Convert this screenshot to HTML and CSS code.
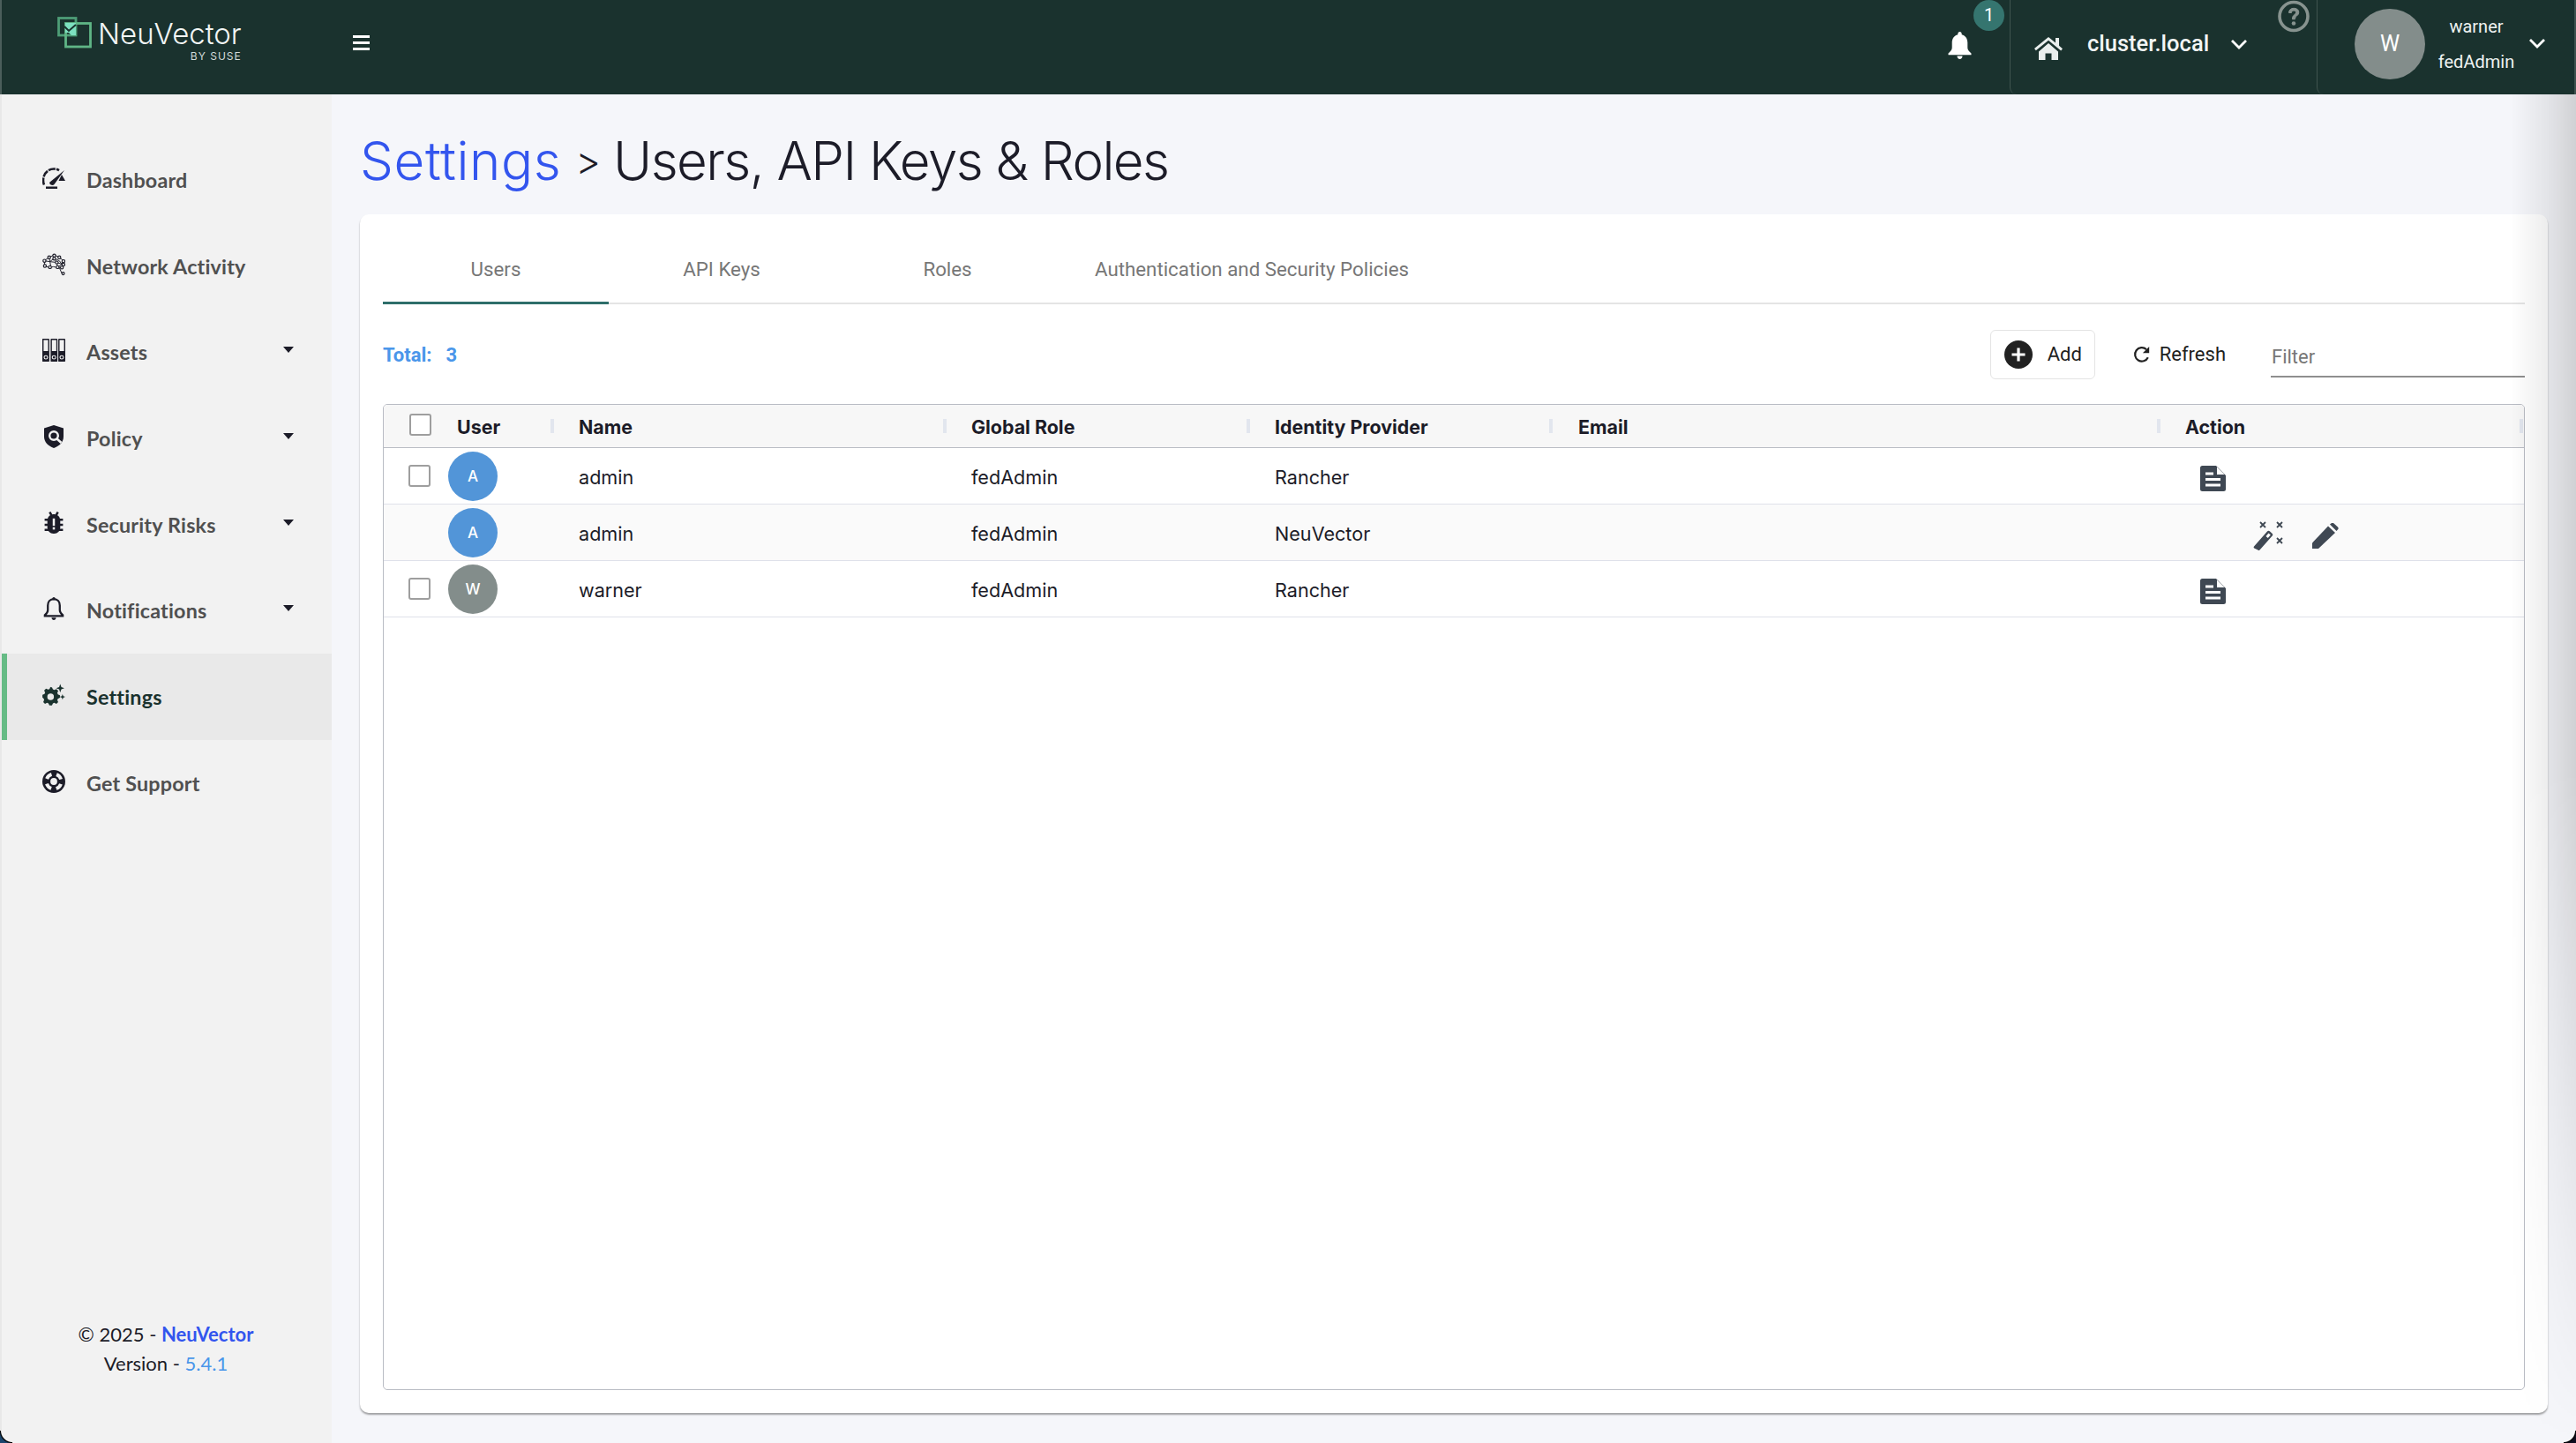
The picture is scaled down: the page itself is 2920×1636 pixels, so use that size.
FILE: index.html
```html
<!DOCTYPE html>
<html lang="en">
<head>
  <meta charset="UTF-8" />
  <title>NeuVector - Users, API Keys &amp; Roles</title>
  <link rel="stylesheet" href="styles.css">
</head>
<body>

  <!-- TOP BAR -->
  <header class="topbar">
    <div class="brand">
      <svg class="brand-mark" viewBox="0 0 40 36" width="40" height="36">
        <rect x="1.500" y="1.500" width="19.500" height="19.500" fill="none" stroke="#4e9d77" stroke-width="2.800"/>
        <rect x="9.500" y="7.500" width="28" height="26.500" fill="none" stroke="#5fb586" stroke-width="2.800"/>
        <path d="M9 7h12v14h-5l-3-3-4 0z" fill="#7de0c0"/>
        <path d="M8 11l5 5 8-7" fill="none" stroke="#1a322e" stroke-width="2"/>
      </svg>
      <div class="brand-text">
        <span class="brand-name">NeuVector</span>
        <span class="brand-sub">BY SUSE</span>
      </div>
    </div>
    <div class="hamburger"><i></i><i></i><i></i></div>

    <div class="topbar-right">
      <div class="alerts">
        <span class="alert-count">1</span>
        <svg class="alert-bell" viewBox="0 0 27 31" width="27" height="31">
          <path d="M13.500 0c1.300 0 2.200 1 2.200 2.300v1c4.300 1 6.600 4.600 6.600 9v5.700c0 2.300 1.500 4 4.200 6.400v1.800H.5v-1.800c2.700-2.400 4.200-4.100 4.200-6.400v-5.700c0-4.400 2.300-8 6.600-9v-1C11.300 1 12.200 0 13.500 0z" fill="#fff"/>
          <path d="M10.500 27.500h6c0 2-1.300 3.500-3 3.500s-3-1.500-3-3.500z" fill="#fff"/>
        </svg>
      </div>
      <div class="cluster">
        <svg class="home-icon" viewBox="0 0 34 27" width="34" height="27">
          <path d="M1 14L17 1l8 6.500V2h4v8.800l4 3.400-1.800 2.200L17 4.800 2.800 16.200z" fill="#e9eeed"/>
          <path d="M6 17.500L17 8l11 9.500V27h-7.500v-7.500h-7V27H6z" fill="#e9eeed"/>
        </svg>
        <span class="cluster-name">cluster.local</span>
        <svg class="chev" viewBox="0 0 20 12" width="20" height="12"><path d="M2 2l8 8 8-8" fill="none" stroke="#fff" stroke-width="2.800"/></svg>
        <svg class="help-icon" viewBox="0 0 36 37" width="36" height="37">
          <circle cx="18" cy="18.500" r="16" fill="none" stroke="#87938f" stroke-width="3.600"/>
          <path d="M12.500 14.500c0-3.300 2.500-5.200 5.700-5.200 3.300 0 5.600 1.900 5.600 4.700 0 4-4.300 3.900-4.300 7.300v.5h-3v-.8c0-4.300 4.100-4.400 4.100-6.900 0-1.200-1-2.100-2.500-2.100s-2.600 1-2.600 2.500z" fill="#87938f" stroke="#87938f" stroke-width="1"/>
          <circle cx="18" cy="26.500" r="2.300" fill="#87938f"/>
        </svg>
      </div>
      <div class="account">
        <span class="account-avatar">W</span>
        <div class="account-info">
          <span>warner</span>
          <span>fedAdmin</span>
        </div>
        <svg class="chev" viewBox="0 0 20 12" width="20" height="12"><path d="M2 2l8 8 8-8" fill="none" stroke="#fff" stroke-width="2.800"/></svg>
      </div>
    </div>
  </header>

  <div class="layout">
    <!-- SIDE NAV -->
    <aside class="sidebar">
      <nav class="nav">
        <a class="nav-item">
          <svg class="nav-icon" viewBox="0 0 26 24"><path d="M2 19.500C1.300 18 1 16.500 1 14.500 1 7 6.300 1.500 13 1.500c2.200 0 4 .5 6 1.700" fill="none" stroke="#1c1c28" stroke-width="2.600" stroke-dasharray="8 1.200"/><path d="M8.500 16.500L25 3 13.500 19c-.8 1.100-2.600 1.300-3.800.6s-2-1.900-1.200-3.100z" fill="#1c1c28"/><path d="M22 8l4 7h-7.500z" fill="#1c1c28"/><rect x="4" y="21.500" width="13" height="2.500" fill="#1c1c28"/></svg>
          <span>Dashboard</span>
        </a>
        <a class="nav-item">
          <svg class="nav-icon" viewBox="0 0 27 25" fill="none" stroke="#1c1c28" stroke-width="1"><path d="M2 8L8 4l6-3 6 3 5 4-2 4 2 1-3 3-2 0 3 7M2 8l1 6 5 2 5-1 5 1M2 8l7 1 5-4 6 3 3 4-5 4M8 4l1 5 1 6M14 1v4l3 5 1 6M9 9l8 1 6 2"/><g fill="#f2f2f2" stroke-width="1.200"><circle cx="2.500" cy="8" r="1.700"/><circle cx="8" cy="4" r="1.700"/><circle cx="14" cy="1.800" r="1.700"/><circle cx="20" cy="4" r="1.700"/><circle cx="24.800" cy="8.500" r="1.700"/><circle cx="3" cy="14" r="1.700"/><circle cx="9" cy="15.500" r="1.700"/><circle cx="14" cy="5.500" r="1.700"/><circle cx="17" cy="10" r="1.700"/><circle cx="24.800" cy="12.500" r="1.700"/><circle cx="18" cy="15.500" r="1.700"/><circle cx="23" cy="16" r="1.700"/><circle cx="24.500" cy="23" r="1.500"/></g></svg>
          <span>Network Activity</span>
        </a>
        <a class="nav-item has-sub">
          <svg class="nav-icon" viewBox="0 0 24 24"><g fill="#1c1c28"><path fill-rule="evenodd" d="M1 0h5.500a.8.800 0 0 1 .8.800v22.400a.8.800 0 0 1-.8.800H1a.8.800 0 0 1-1-.8V.8A.8.800 0 0 1 1 0zm.3 1.300v11.700h4.700V1.300z"/><path fill-rule="evenodd" d="M9.500 0h5.500a.8.800 0 0 1 .8.800v22.400a.8.800 0 0 1-.8.800H9.500a.8.800 0 0 1-.8-.8V.8a.8.800 0 0 1 .8-.8zm.5 1.300v11.700h4.600V1.300z"/><path fill-rule="evenodd" d="M17.500 0H23a1 1 0 0 1 1 .8v22.400a1 1 0 0 1-1 .8h-5.500a.8.800 0 0 1-.8-.8V.8a.8.800 0 0 1 .8-.8zm.5 1.300v11.700h4.700V1.300z"/></g><g fill="none" stroke="#f2f2f2" stroke-width="1"><circle cx="3.700" cy="19.500" r="1.800"/><circle cx="12.200" cy="19.500" r="1.800"/><circle cx="20.300" cy="19.500" r="1.800"/></g></svg>
          <span>Assets</span>
          <i class="caret"></i>
        </a>
        <a class="nav-item has-sub">
          <svg class="nav-icon" viewBox="0 0 22 26"><path d="M11 0l11 3.500v9.500c0 6-4.500 10.700-11 13C4.500 23.700 0 19 0 13V3.500z" fill="#1c1c28"/><circle cx="11" cy="12" r="4.800" fill="none" stroke="#f2f2f2" stroke-width="2.400"/><path d="M14.500 15.500l5 4.500" stroke="#f2f2f2" stroke-width="2.600"/></svg>
          <span>Policy</span>
          <i class="caret"></i>
        </a>
        <a class="nav-item has-sub">
          <svg class="nav-icon" viewBox="0 0 20 25"><g stroke="#1c1c28" stroke-width="2.400" fill="none"><path d="M5.500 0.500l2 3.500M14.500 0.500l-2 3.500M0 9h4M20 9h-4M0 14.500h4M20 14.500h-4M0 20h4.500M20 20h-4.500"/></g><rect x="3" y="3" width="14" height="21" rx="6.500" fill="#1c1c28"/><rect x="8.800" y="7.500" width="2.400" height="8" fill="#f2f2f2"/><rect x="8.800" y="17" width="2.400" height="2.600" fill="#f2f2f2"/></svg>
          <span>Security Risks</span>
          <i class="caret"></i>
        </a>
        <a class="nav-item has-sub">
          <svg class="nav-icon" viewBox="0 0 20 23"><path d="M10 1.800c3.800 0 6 3 6 6.500v4.700c0 2 1 3.300 3 5v1H1v-1c2-1.700 3-3 3-5V8.300c0-3.500 2.200-6.500 6-6.500z" fill="none" stroke="#1c1c28" stroke-width="2"/><circle cx="10" cy="1.600" r="1.500" fill="#1c1c28"/><path d="M7.800 20.500h4.400c0 1.500-1 2.500-2.200 2.500s-2.200-1-2.200-2.500z" fill="#1c1c28"/></svg>
          <span>Notifications</span>
          <i class="caret"></i>
        </a>
        <a class="nav-item active">
          <svg class="nav-icon" viewBox="0 0 25 24"><path d="M9.500 6.500l1 0 1 2.300 1.500.6 2.300-1 2 2-1 2.300.6 1.500 2.300 1v2.800l-2.300 1-.6 1.500 1 2.300-2 1.700-2.300-1-1.500.6-1 2.300H7.700l-1-2.300-1.500-.6-2.300 1-1.900-1.900 1-2.300-.6-1.500L.1 17.600v-2.800l2.300-1 .6-1.500-1-2.300 2-2 2.300 1 1.500-.6 1-2.300z" transform="translate(0 -3)" fill="#1a322e"/><circle cx="9" cy="14" r="3.600" fill="#e9e9e9"/><path d="M19.500 0l1.200 3.300L24 4.500l-3.300 1.200-1.200 3.300-1.200-3.300L15 4.500l3.300-1.200z" fill="#1a322e"/><path d="M22 11l.8 2.200 2.200.8-2.200.8-.8 2.200-.8-2.200-2.200-.8 2.200-.8z" fill="#1a322e"/></svg>
          <span>Settings</span>
        </a>
        <a class="nav-item">
          <svg class="nav-icon" viewBox="0 0 24 24"><circle cx="12" cy="12" r="12" fill="#1c1c28"/><circle cx="12" cy="12" r="7.800" fill="none" stroke="#f2f2f2" stroke-width="3.600" stroke-dasharray="7 5.250" stroke-dashoffset="-2.630"/><circle cx="12" cy="12" r="3.600" fill="#f2f2f2"/></svg>
          <span>Get Support</span>
        </a>
      </nav>
      <div class="sidebar-foot">
        <div>© 2025 - <a class="foot-link">NeuVector</a></div>
        <div>Version - <a class="foot-version">5.4.1</a></div>
      </div>
    </aside>

    <!-- PAGE -->
    <main class="page">
      <h1 class="page-title"><span class="crumb">Settings</span><span class="crumb-sep">&gt;</span><span class="crumb-here">Users, API Keys &amp; Roles</span></h1>

      <section class="card">
        <div class="tabs">
          <a class="tab tab-active">Users</a>
          <a class="tab">API Keys</a>
          <a class="tab">Roles</a>
          <a class="tab tab-wide">Authentication and Security Policies</a>
        </div>

        <div class="toolbar">
          <div class="total"><span>Total:</span><span>3</span></div>
          <div class="tools">
            <button class="btn btn-add">
              <svg viewBox="0 0 32 32" width="32" height="32"><circle cx="16" cy="16" r="16" fill="#212121"/><path d="M16 8.500v15M8.500 16h15" stroke="#fff" stroke-width="3.200"/></svg>
              Add
            </button>
            <button class="btn btn-refresh">
              <svg viewBox="0 0 22 22" width="20" height="20"><path d="M18.500 14.500A8.500 8.500 0 1 1 16.500 4.500" fill="none" stroke="#212121" stroke-width="2.400"/><path d="M20 1v8h-8z" fill="#212121"/></svg>
              Refresh
            </button>
            <div class="filter">Filter</div>
          </div>
        </div>

        <div class="grid">
          <div class="grid-row grid-head">
            <div class="cell cell-check"><span class="check"></span></div>
            <div class="cell cell-user">User<i class="sep"></i></div>
            <div class="cell">Name<i class="sep"></i></div>
            <div class="cell">Global Role<i class="sep"></i></div>
            <div class="cell">Identity Provider<i class="sep"></i></div>
            <div class="cell cell-email">Email<i class="sep"></i></div>
            <div class="cell">Action<i class="sep sep-end"></i></div>
          </div>

          <div class="grid-row">
            <div class="cell cell-check"><span class="check"></span></div>
            <div class="cell cell-avatar"><span class="avatar avatar-blue">A</span></div>
            <div class="cell">admin</div>
            <div class="cell">fedAdmin</div>
            <div class="cell">Rancher</div>
            <div class="cell"></div>
            <div class="cell cell-actions">
              <svg class="act-doc" viewBox="0 0 29 29" width="29" height="29"><path d="M2.500 0H18l11 11v15.500a2.500 2.500 0 0 1-2.500 2.500h-24A2.500 2.500 0 0 1 0 26.500v-24A2.500 2.500 0 0 1 2.500 0z" fill="#3f4853"/><path d="M19 1.500v8.500h8.500z" fill="#fff"/><rect x="6" y="7.500" width="9" height="3" fill="#fff"/><rect x="6" y="14" width="17" height="3" fill="#fff"/><rect x="6" y="20.500" width="17" height="3" fill="#fff"/></svg>
            </div>
          </div>

          <div class="grid-row row-alt">
            <div class="cell cell-check"></div>
            <div class="cell cell-avatar"><span class="avatar avatar-blue">A</span></div>
            <div class="cell">admin</div>
            <div class="cell">fedAdmin</div>
            <div class="cell">NeuVector</div>
            <div class="cell"></div>
            <div class="cell cell-actions row-tools">
              <svg viewBox="0 0 35 33" width="35" height="33"><path d="M1 28.500L16 11.500a2 2 0 0 1 2.800-.2l2.700 2.400a2 2 0 0 1 .2 2.800L7.500 32.500a1.500 1.500 0 0 1-2.100.1L1.200 30.500a1.500 1.500 0 0 1-.2-2z" fill="#3f4853"/><path d="M17.500 13.500l2.300 2-3 3.500-2.300-2z" fill="#fff"/><g stroke="#3f4853" stroke-width="1.800"><path d="M8 1l6 6M14 1l-6 6M27 1l6 6M33 1l-6 6M27 19l6 6M33 19l-6 6"/></g></svg>
              <svg viewBox="0 0 30 29" width="30" height="29"><path d="M0 29v-6.500L18 3.500l8 7.500L7 29z" fill="#3f4853"/><path d="M20 1.500l2-1.500a2 2 0 0 1 2 0l5 4.500a2 2 0 0 1 .3 2.500L27.500 9z" fill="#3f4853"/></svg>
            </div>
          </div>

          <div class="grid-row">
            <div class="cell cell-check"><span class="check"></span></div>
            <div class="cell cell-avatar"><span class="avatar avatar-gray">W</span></div>
            <div class="cell">warner</div>
            <div class="cell">fedAdmin</div>
            <div class="cell">Rancher</div>
            <div class="cell"></div>
            <div class="cell cell-actions">
              <svg class="act-doc" viewBox="0 0 29 29" width="29" height="29"><path d="M2.500 0H18l11 11v15.500a2.500 2.500 0 0 1-2.500 2.500h-24A2.500 2.500 0 0 1 0 26.500v-24A2.500 2.500 0 0 1 2.500 0z" fill="#3f4853"/><path d="M19 1.500v8.500h8.500z" fill="#fff"/><rect x="6" y="7.500" width="9" height="3" fill="#fff"/><rect x="6" y="14" width="17" height="3" fill="#fff"/><rect x="6" y="20.500" width="17" height="3" fill="#fff"/></svg>
            </div>
          </div>
        </div>
      </section>
    </main>
  </div>

  <!-- window corners of the screenshot -->
  <i class="corner corner-left"></i>
  <i class="corner corner-right"></i>
</body>
</html>
```

FILE: styles.css
```css
html, body {
  margin: 0;
  padding: 0;
  height: 100%;
  overflow: hidden;
}

body {
  display: flex;
  flex-direction: column;
  background: #f5f6fa;
  font-family: "Roboto", "Liberation Sans", sans-serif;
  color: #1c1c28;
  position: relative;
}

/* TOP BAR */
.topbar {
  flex: 0 0 107px;
  display: flex;
  align-items: stretch;
  background: #1a322e;
  color: #fff;
  border-left: 2px solid #4b5e5b;
  border-right: 2px solid #3d524e;
  box-sizing: border-box;
}

.brand {
  display: flex;
  align-items: flex-start;
  gap: 6px;
  padding: 19px 0 0 63px;
  width: 335px;
  box-sizing: border-box;
}

.brand-text {
  display: flex;
  flex-direction: column;
  align-items: flex-end;
}

.brand-name {
  font-family: "Inter", sans-serif;
  font-weight: 300;
  font-size: 33px;
  line-height: 38px;
  color: #f1f5f4;
}

.brand-sub {
  font-family: "Inter", sans-serif;
  font-size: 12px;
  line-height: 13px;
  letter-spacing: 1px;
  color: #d4dcda;
}

.hamburger {
  display: flex;
  flex-direction: column;
  justify-content: space-between;
  width: 19px;
  height: 17px;
  margin: 40px 0 0 63px;
}

.hamburger i {
  display: block;
  height: 3px;
  background: #fff;
}

.topbar-right {
  margin-left: auto;
  display: flex;
  align-items: stretch;
  padding-right: 1px;
}

.alerts {
  width: 77px;
  position: relative;
}

.alert-bell {
  position: absolute;
  left: 7px;
  top: 36px;
}

.alert-count {
  position: absolute;
  left: 36px;
  top: 0;
  width: 35px;
  height: 35px;
  border-radius: 50%;
  background: #35756f;
  font-size: 20px;
  line-height: 35px;
  text-align: center;
}

.cluster {
  width: 348px;
  box-sizing: border-box;
  border-left: 1px solid #40544f;
  border-bottom-left-radius: 8px;
  padding-left: 26px;
  display: flex;
  align-items: center;
  position: relative;
}

.home-icon {
  margin-right: 27px;
  margin-top: 2px;
}

.cluster-name {
  font-size: 25.500px;
  font-weight: 500;
  color: #f2f5f4;
  margin-right: 24px;
  margin-top: -9px;
}

.cluster .chev {
  margin-top: -7px;
}

.help-icon {
  position: absolute;
  left: 303px;
  top: 0;
}

.account {
  width: 291px;
  box-sizing: border-box;
  border-left: 1px solid #40544f;
  border-bottom-left-radius: 8px;
  padding-left: 42px;
  display: flex;
  align-items: center;
}

.account-avatar {
  flex: 0 0 80px;
  height: 80px;
  border-radius: 50%;
  background: #838d8b;
  font-size: 25px;
  line-height: 80px;
  text-align: center;
  margin-top: -7px;
}

.account-info {
  width: 116px;
  display: flex;
  flex-direction: column;
  align-items: center;
  gap: 16px;
  font-size: 20px;
  line-height: 24px;
  margin-top: -7px;
  color: #eef2f1;
}

.account .chev {
  margin-left: 1px;
  margin-top: -9px;
}

/* LAYOUT */
.layout {
  flex: 1;
  display: flex;
  min-height: 0;
}

.sidebar {
  flex: 0 0 376px;
  display: flex;
  flex-direction: column;
  justify-content: space-between;
  box-sizing: border-box;
  background: #f2f2f2;
  border-left: 2px solid #e8e8e8;
  padding: 48px 2px 74px 0;
  font-family: "Lato", sans-serif;
}

.nav {
  margin-right: -2px;
}

.nav-item {
  height: 97.7px;
  box-sizing: border-box;
  display: flex;
  align-items: center;
  padding-left: 46px;
  font-size: 23.300px;
  font-weight: 700;
  color: #505050;
  letter-spacing: 0.2px;
}

.nav-icon {
  flex: 0 0 26px;
  width: 26px;
  height: 26px;
  margin-right: 24px;
  margin-top: -4px;
}

.nav-item.active {
  background: #e9e9e9;
  border-left: 6px solid #66bb85;
  padding-left: 40px;
  color: #1a322e;
}

.caret {
  margin-left: auto;
  margin-right: 43px;
  margin-top: -5px;
  border-left: 6px solid transparent;
  border-right: 6px solid transparent;
  border-top: 7px solid #1c1c28;
}

.sidebar-foot {
  text-align: center;
  font-size: 22px;
  line-height: 33px;
  color: #1c1c28;
}

.foot-link { color: #3355ee; font-weight: 700; }
.foot-version { color: #4a96ea; }

/* PAGE */
.page {
  flex: 1;
  min-width: 0;
  display: flex;
  flex-direction: column;
  padding: 0 32px 34px;
  position: relative;
}

/* grey shade that runs down the right edge of the capture */
.page::after {
  content: "";
  position: absolute;
  top: 0;
  right: 0;
  bottom: 0;
  width: 74px;
  pointer-events: none;
  background: linear-gradient(to left, rgba(0, 0, 0, 0.15) 0, rgba(0, 0, 0, 0.07) 32px, transparent 74px);
  -webkit-mask-image: linear-gradient(to bottom, #000 50%, transparent 100%);
  mask-image: linear-gradient(to bottom, #000 50%, transparent 100%);
}

.page-title {
  margin: 0;
  height: 136px;
  box-sizing: border-box;
  padding-top: 14px;
  display: flex;
  align-items: center;
  font-family: "Inter", sans-serif;
  font-weight: 300;
  font-size: 60px;
  color: #1c1c28;
}

.crumb { color: #3355ee; letter-spacing: 0.6px; }
.crumb-sep { margin: 0 14px 0 16px; font-size: 44px; }
.crumb-here { letter-spacing: -1.550px; }

.card {
  flex: 1;
  min-height: 0;
  display: flex;
  flex-direction: column;
  background: #fff;
  border-radius: 10px;
  box-shadow: 0 2px 2px rgba(0, 0, 0, 0.35);
  padding: 0 26px 26px;
}

.tabs {
  display: flex;
  height: 102px;
  border-bottom: 2px solid #e4e4e4;
  box-sizing: border-box;
}

.tab {
  width: 256px;
  display: flex;
  align-items: center;
  justify-content: center;
  font-size: 22.300px;
  color: #777;
  height: 102px;
  box-sizing: border-box;
  padding-top: 22px;
}

.tab-wide { width: 434px; }

.tab-active {
  box-shadow: inset 0 -3px 0 #2e6e6a;
}

.toolbar {
  display: flex;
  align-items: center;
  justify-content: space-between;
  height: 113px;
  box-sizing: border-box;
}

.total {
  display: flex;
  gap: 16px;
  font-size: 22px;
  font-weight: 700;
  color: #4a96ea;
  margin-top: 2px;
}

.tools {
  display: flex;
  align-items: center;
}

.btn {
  display: flex;
  align-items: center;
  font-family: inherit;
  font-size: 22px;
  color: #212121;
  background: none;
  border: 0;
  padding: 0;
}

.btn-add {
  width: 119px;
  height: 56px;
  box-sizing: border-box;
  border: 1px solid #e4e4e4;
  border-radius: 6px;
  padding-left: 15px;
  gap: 17px;
}

.btn-refresh {
  margin-left: 43px;
  gap: 10px;
}

.filter {
  width: 288px;
  height: 52px;
  margin-left: 51px;
  box-sizing: border-box;
  border-bottom: 2px solid #8f8f8f;
  padding: 16px 0 0 1px;
  font-size: 22px;
  color: #777;
}

/* TABLE */
.grid {
  flex: 1;
  border: 1px solid #b9bcc4;
  border-radius: 5px;
  font-family: "Inter", sans-serif;
  font-size: 21.600px;
  overflow: hidden;
}

.grid-row {
  display: grid;
  grid-template-columns: 70px 121px 445px 344px 343px 689px 1fr;
  height: 64px;
  border-bottom: 1px solid #dfe1ea;
  box-sizing: border-box;
  color: #1c1c28;
}

.row-alt { background: #fafafa; }

.grid-head {
  height: 49px;
  background: #f7f7f7;
  border-bottom: 1px solid #b9bcc4;
  font-weight: 700;
  font-size: 21.400px;
}

.cell {
  position: relative;
  display: flex;
  align-items: center;
  padding: 2px 0 0 30px;
  min-width: 0;
  box-sizing: border-box;
}

.cell-check { padding: 0 0 0 28px; }
.grid-head .cell-check { padding: 0 0 3px 29px; }
.cell-user { padding-left: 13px; }
.cell-avatar { padding: 0 0 0 3px; }
.cell-email { padding-left: 31px; }

.sep {
  position: absolute;
  right: -2px;
  top: 16px;
  width: 4px;
  height: 16px;
  background: #e2e6ee;
}

.sep-end { right: 1px; }

.check {
  display: block;
  width: 25px;
  height: 25px;
  box-sizing: border-box;
  border: 2px solid #9e9e9e;
  border-radius: 3px;
  background: #fff;
}

.avatar {
  display: block;
  width: 56px;
  height: 56px;
  border-radius: 50%;
  color: #fff;
  font-size: 17px;
  font-weight: 500;
  line-height: 56px;
  text-align: center;
}

.avatar-blue { background: #5295d8; }
.avatar-gray { background: #838d8b; }

.cell-actions { padding: 5px 0 0 47px; }
.row-tools { padding: 7px 0 0 107px; gap: 32px; }

/* rounded corners of the captured window */
.corner {
  position: absolute;
  bottom: 0;
  width: 14px;
  height: 14px;
}

.corner-left {
  left: 0;
  background: radial-gradient(circle at 100% 0, transparent 12.500px, #000 13.500px, #1c466e 15px);
}

.corner-right {
  right: 0;
  background: radial-gradient(circle at 0 0, transparent 12.500px, #000 13.500px, #0c0c1e 15px);
}
```
